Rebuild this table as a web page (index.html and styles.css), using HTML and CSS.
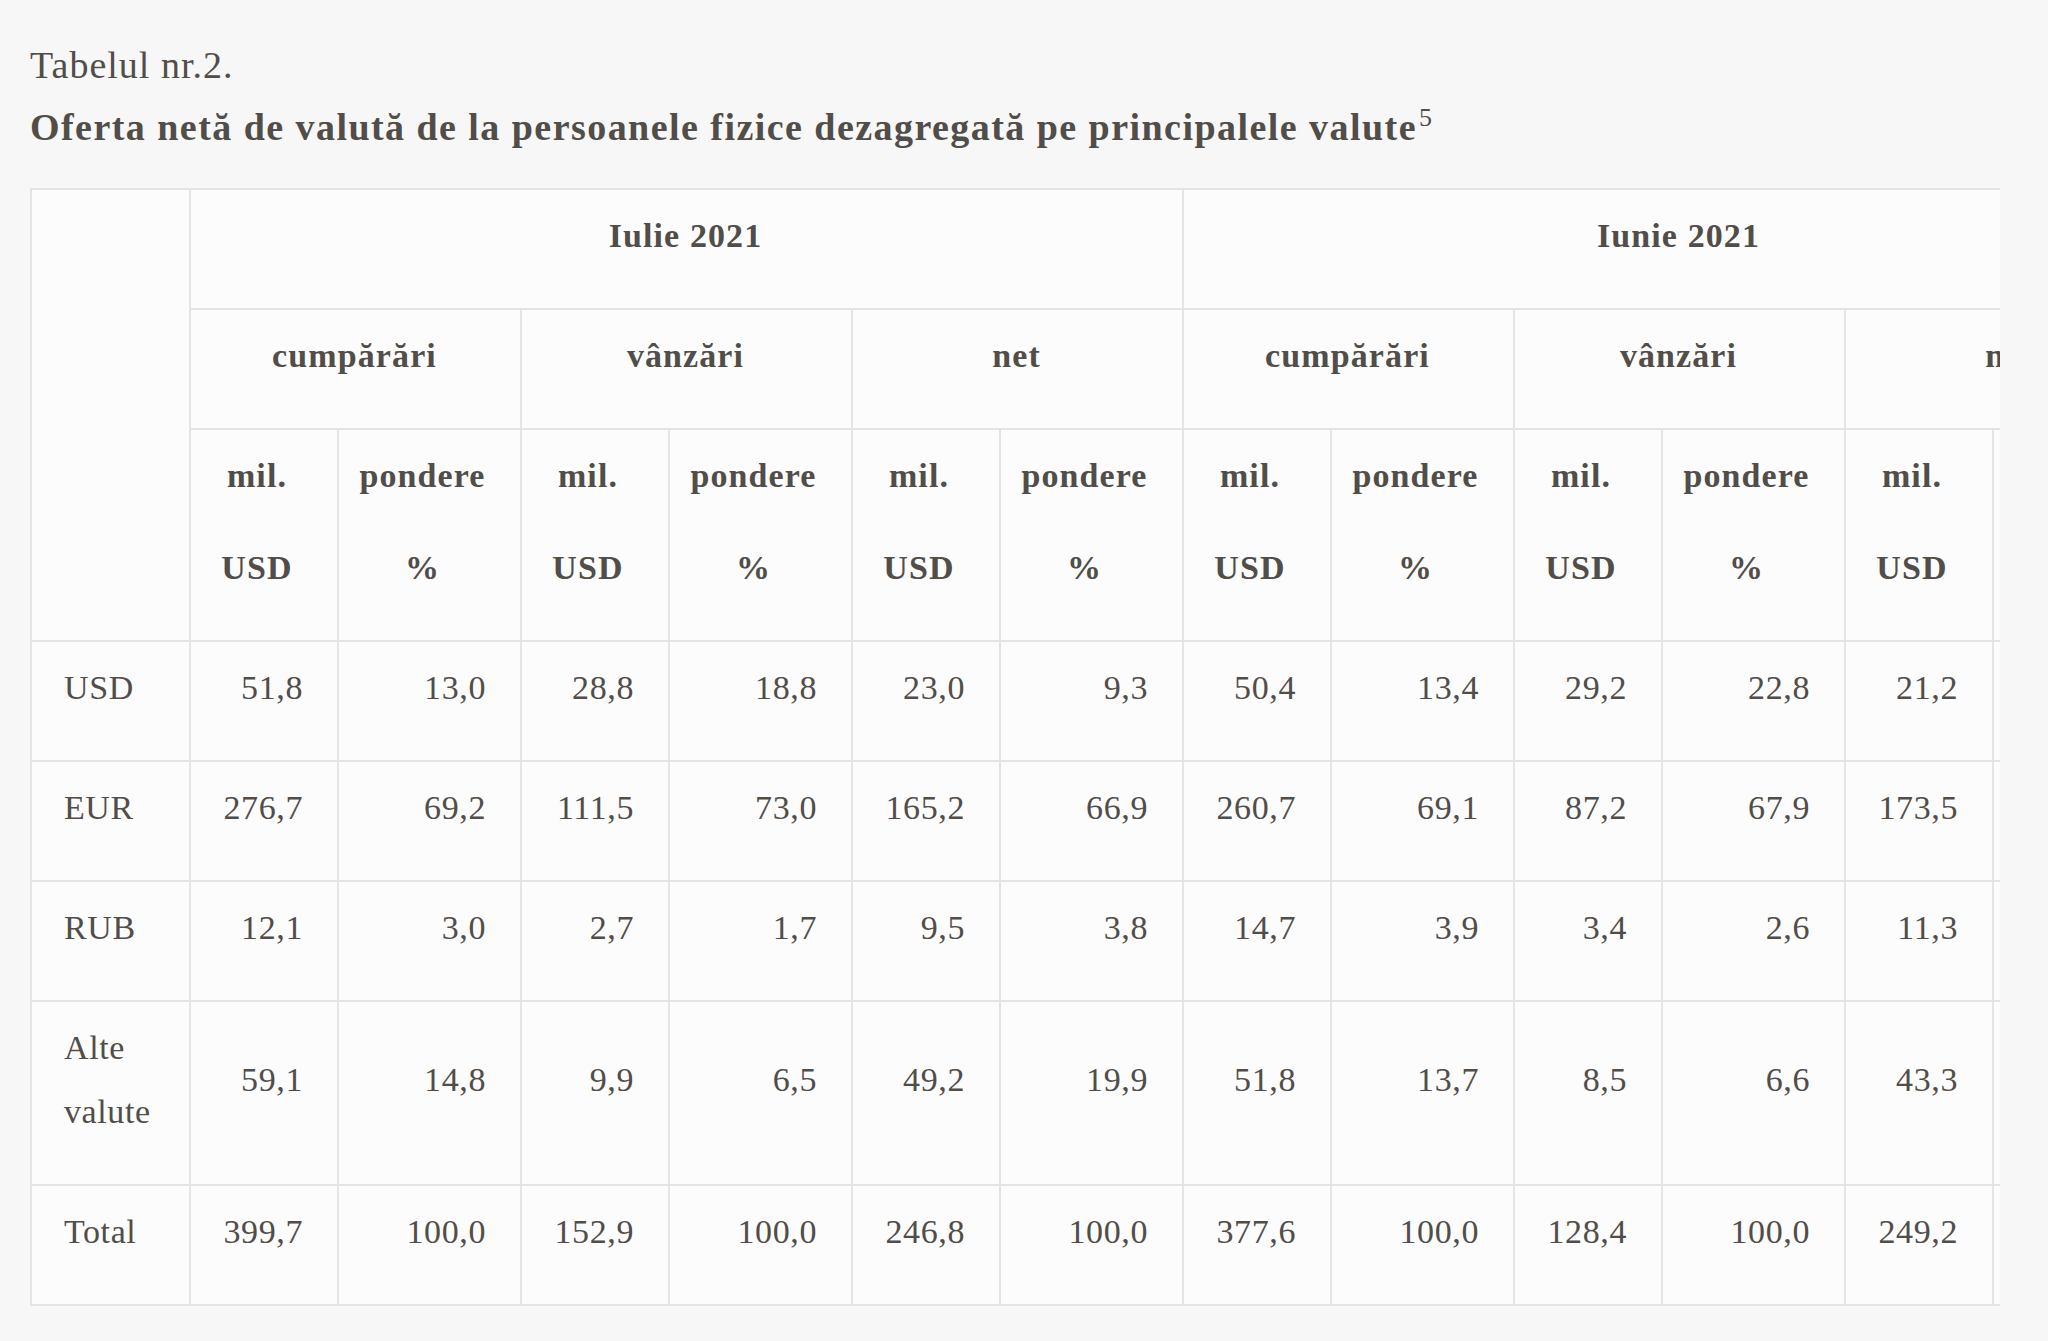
FILE: index.html
```html
<!DOCTYPE html>
<html lang="ro">
<head>
<meta charset="utf-8">
<title>Tabelul nr.2.</title>
<link rel="stylesheet" href="styles.css">
</head>
<body>
<div class="article">
  <p class="caption">Tabelul nr.2.</p>
  <p class="title"><strong>Oferta netă de valută de la persoanele fizice dezagregată pe principalele valute</strong><sup>5</sup></p>
  <div class="table-wrap">
    <table class="data">
      <colgroup>
        <col class="c-label">
        <col class="c-mil"><col class="c-pond">
        <col class="c-mil"><col class="c-pond">
        <col class="c-mil"><col class="c-pond">
        <col class="c-mil"><col class="c-pond">
        <col class="c-mil"><col class="c-pond">
        <col class="c-mil"><col class="c-pond">
      </colgroup>
      <thead>
        <tr>
          <th rowspan="3"></th>
          <th colspan="6">Iulie 2021</th>
          <th colspan="6">Iunie 2021</th>
        </tr>
        <tr>
          <th colspan="2">cumpărări</th>
          <th colspan="2">vânzări</th>
          <th colspan="2">net</th>
          <th colspan="2">cumpărări</th>
          <th colspan="2">vânzări</th>
          <th colspan="2">net</th>
        </tr>
        <tr>
          <th class="unit"><span class="ln">mil.</span><span class="ln ln2">USD</span></th>
          <th class="unit"><span class="ln">pondere</span><span class="ln ln2">%</span></th>
          <th class="unit"><span class="ln">mil.</span><span class="ln ln2">USD</span></th>
          <th class="unit"><span class="ln">pondere</span><span class="ln ln2">%</span></th>
          <th class="unit"><span class="ln">mil.</span><span class="ln ln2">USD</span></th>
          <th class="unit"><span class="ln">pondere</span><span class="ln ln2">%</span></th>
          <th class="unit"><span class="ln">mil.</span><span class="ln ln2">USD</span></th>
          <th class="unit"><span class="ln">pondere</span><span class="ln ln2">%</span></th>
          <th class="unit"><span class="ln">mil.</span><span class="ln ln2">USD</span></th>
          <th class="unit"><span class="ln">pondere</span><span class="ln ln2">%</span></th>
          <th class="unit"><span class="ln">mil.</span><span class="ln ln2">USD</span></th>
          <th class="unit"><span class="ln">pondere</span><span class="ln ln2">%</span></th>
        </tr>
      </thead>
      <tbody>
        <tr>
          <td class="lbl">USD</td>
          <td>51,8</td><td>13,0</td><td>28,8</td><td>18,8</td><td>23,0</td><td>9,3</td>
          <td>50,4</td><td>13,4</td><td>29,2</td><td>22,8</td><td>21,2</td><td>8,5</td>
        </tr>
        <tr>
          <td class="lbl">EUR</td>
          <td>276,7</td><td>69,2</td><td>111,5</td><td>73,0</td><td>165,2</td><td>66,9</td>
          <td>260,7</td><td>69,1</td><td>87,2</td><td>67,9</td><td>173,5</td><td>69,6</td>
        </tr>
        <tr>
          <td class="lbl">RUB</td>
          <td>12,1</td><td>3,0</td><td>2,7</td><td>1,7</td><td>9,5</td><td>3,8</td>
          <td>14,7</td><td>3,9</td><td>3,4</td><td>2,6</td><td>11,3</td><td>4,5</td>
        </tr>
        <tr>
          <td class="lbl">Alte valute</td>
          <td>59,1</td><td>14,8</td><td>9,9</td><td>6,5</td><td>49,2</td><td>19,9</td>
          <td>51,8</td><td>13,7</td><td>8,5</td><td>6,6</td><td>43,3</td><td>17,4</td>
        </tr>
        <tr>
          <td class="lbl">Total</td>
          <td>399,7</td><td>100,0</td><td>152,9</td><td>100,0</td><td>246,8</td><td>100,0</td>
          <td>377,6</td><td>100,0</td><td>128,4</td><td>100,0</td><td>249,2</td><td>100,0</td>
        </tr>
      </tbody>
    </table>
  </div>
</div>
</body>
</html>
```
FILE: styles.css
```css
html, body {
  margin: 0;
  padding: 0;
  background: #f7f7f7;
}

body {
  font-family: "Liberation Serif", "Times New Roman", serif;
  color: #514d49;
}

.article {
  padding: 38px 0 0 30px;
}

.caption {
  margin: 0;
  font-size: 38px;
  line-height: 54px;
  letter-spacing: 1px;
}

.title {
  margin: 8px 0 0;
  font-size: 38px;
  line-height: 54px;
}

.title strong {
  font-weight: 700;
  letter-spacing: 1.45px;
}

.title sup {
  font-size: 26px;
  line-height: 0;
  vertical-align: 14px;
  margin-left: 2px;
}

.table-wrap {
  margin-top: 34px;
  width: 1970px;
  overflow: hidden;
}

.data {
  border-collapse: collapse;
  table-layout: fixed;
  width: 2146px;
  background: #fcfcfc;
  font-size: 34px;
  line-height: 64px;
}

.c-label { width: 159px; }
.c-mil { width: 148px; }
.c-pond { width: 183px; }

.data th,
.data td {
  border: 2px solid #e4e4e4;
  padding: 14px 34px 40px 32px;
  vertical-align: middle;
  white-space: nowrap;
}

.data th {
  font-weight: 700;
  text-align: center;
  letter-spacing: 1.1px;
}

.data th.unit {
  padding-left: 10px;
  padding-right: 24px;
}

.data th .ln {
  display: block;
}

.data th .ln2 {
  margin-top: 28px;
}

.data td {
  text-align: right;
  letter-spacing: 0.6px;
}

.data td.lbl {
  text-align: left;
  white-space: normal;
}
```
